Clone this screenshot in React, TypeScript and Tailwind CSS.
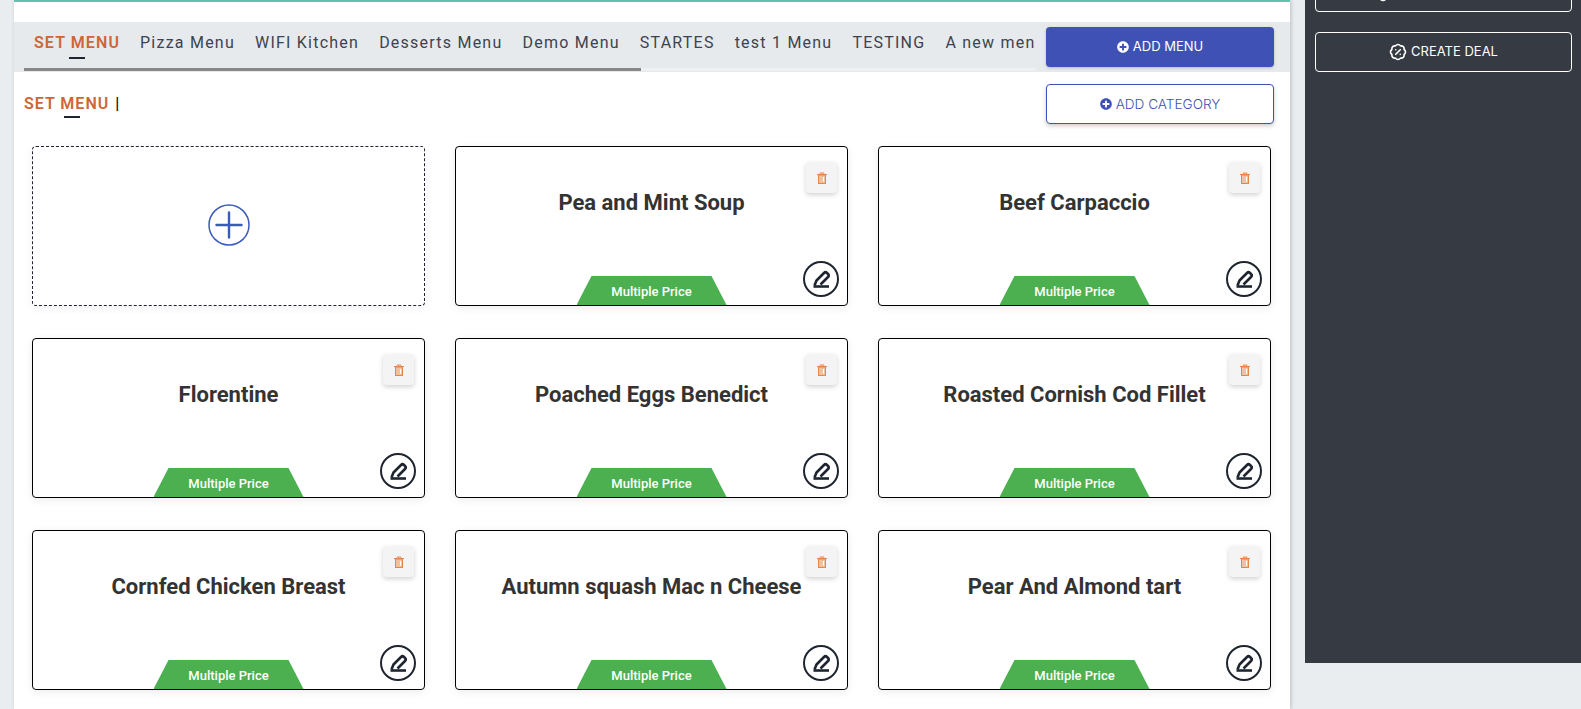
import { BadgePercent } from "lucide-react";
import { FaPlusCircle } from "react-icons/fa";

const menus = [
  "SET MENU",
  "Pizza Menu",
  "WIFI Kitchen",
  "Desserts Menu",
  "Demo Menu",
  "STARTES",
  "test 1 Menu",
  "TESTING",
  "A new menu",
];

const dishes = [
  "Pea and Mint Soup",
  "Beef Carpaccio",
  "Florentine",
  "Poached Eggs Benedict",
  "Roasted Cornish Cod Fillet",
  "Cornfed Chicken Breast",
  "Autumn squash Mac n Cheese",
  "Pear And Almond tart",
];

function TrashIcon() {
  return (
    <svg width="10" height="12" viewBox="0 0 10 12">
      <path d="M3 2V.8h4V2" fill="#eab08a" stroke="#eab08a" strokeWidth="1" />
      <rect x="1.5" y="3" width="7" height="8.5" fill="#ecc2a4" stroke="#e6854a" strokeWidth="1" />
      <path d="M0 2.5h10" stroke="#e6854a" strokeWidth="1" />
      <path d="M6.5 5v4.5" stroke="#fff" strokeWidth="1" />
    </svg>
  );
}

function EditIcon() {
  return (
    <svg width="36" height="36" viewBox="0 0 36 36" fill="none" stroke="#1f2530">
      <circle cx="18" cy="18" r="17" strokeWidth="2" />
      <path
        d="M11.5 24.5 L13.5 19.5 L21 12 Q22.5 10.5 24 12 L25 13 Q26.5 14.5 25 16 L17.5 23.5"
        strokeWidth="2.6"
        strokeLinejoin="round"
      />
      <path d="M10.5 25.5 H26" strokeWidth="2.6" />
    </svg>
  );
}

function DishCard({ name }: { name: string }) {
  return (
    <div className="relative h-[160px] rounded-[4px] border border-black bg-white pt-[43px] shadow-[0_2px_8px_rgba(0,0,0,0.08)]">
      <h3 className="text-center text-[22px] leading-[26px] font-bold text-[#333333] font-['Roboto',sans-serif]">
        {name}
      </h3>
      <button className="absolute top-[15px] right-[10px] flex h-[31px] w-[31px] items-center justify-center rounded-[4px] bg-[#f4f4f4] shadow-[0_2px_5px_rgba(0,0,0,0.18)]">
        <TrashIcon />
      </button>
      <button className="absolute right-[8px] bottom-[8px] flex h-[36px] w-[36px] items-center justify-center">
        <EditIcon />
      </button>
      <div className="absolute bottom-0 left-1/2 flex h-[29px] w-[150px] -translate-x-1/2 items-center justify-center bg-[#4caf50] pt-[2px] text-[13px] font-medium text-white font-['Roboto',sans-serif] [clip-path:polygon(10%_0,90%_0,100%_100%,0_100%)]">
        Multiple Price
      </div>
    </div>
  );
}

export default function App() {
  return (
    <div className="flex h-[709px] w-[1581px] overflow-hidden bg-[#e9edf0] pl-[14px] font-['Roboto',sans-serif]">
      <main className="h-[709px] w-[1276px] shrink-0 border-t-2 border-[#5cc3ae] bg-white pt-[20px] shadow-[1px_0_4px_rgba(0,0,0,0.2)]">
        <div className="flex h-[50px] bg-[#e6eaed] pl-[10px]">
          <div className="flex w-[1012px] flex-col overflow-hidden">
            <div className="flex h-[46px] gap-[20px] overflow-hidden whitespace-nowrap pl-[10px] pt-[9px]">
              {menus.map((menu, i) => (
                <div key={menu} className="relative h-[37px] shrink-0">
                  <span
                    className={
                      i === 0
                        ? "text-[16px] leading-[22px] font-semibold tracking-[1.1px] text-[#cf6537]"
                        : "text-[16px] leading-[22px] tracking-[1.23px] text-[#3d4350]"
                    }
                  >
                    {menu}
                  </span>
                  {i === 0 && (
                    <span className="absolute top-[26px] left-[35px] h-[2px] w-[16px] bg-[#1f2530]" />
                  )}
                </div>
              ))}
            </div>
            <div className="h-[3px] bg-[#eef0f2]">
              <div className="h-full w-[617px] bg-[#888888]" />
            </div>
          </div>
          <button className="mt-[5px] ml-[10px] flex h-[40px] w-[228px] items-center justify-center gap-[4px] rounded-[4px] bg-[#3f51b5] text-[13px] text-white font-['Inter',sans-serif] shadow-[0_1px_3px_rgba(0,0,0,0.2)]">
            <FaPlusCircle className="h-[12px] w-[12px]" />
            ADD MENU
          </button>
        </div>

        <div className="flex items-start justify-between pt-[12px] pr-[16px] pl-[10px]">
          <div className="relative pt-[10px] text-[16px] leading-[20px] font-semibold tracking-[1px] text-[#cf6537]">
            SET MENU
            <span className="ml-[6px] font-medium text-black">|</span>
            <span className="absolute top-[32px] left-[40px] h-[2px] w-[16px] bg-[#1f2530]" />
          </div>
          <button className="flex h-[40px] w-[228px] items-center justify-center gap-[4px] rounded-[4px] border border-[#3f51b5] bg-white text-[13.6px] text-[#3f51b5] font-['Inter',sans-serif] font-light shadow-[0_2px_4px_rgba(0,0,0,0.2)]">
            <FaPlusCircle className="h-[12px] w-[12px]" />
            ADD CATEGORY
          </button>
        </div>

        <div className="grid grid-cols-[393px_393px_393px] gap-x-[30px] gap-y-[32px] pt-[22px] pl-[18px]">
          <div className="flex h-[160px] items-center justify-center rounded-[4px] border border-dashed border-[#1f2530] bg-white pb-[2px] shadow-[0_2px_8px_rgba(0,0,0,0.06)]">
            <svg width="42" height="42" viewBox="0 0 42 42" fill="none" stroke="#3a5cb8">
              <circle cx="21" cy="21" r="20" strokeWidth="1.5" />
              <path d="M8.5 21h25M21 8.5v25" strokeWidth="2.4" strokeLinecap="round" />
            </svg>
          </div>
          {dishes.map((dish) => (
            <DishCard key={dish} name={dish} />
          ))}
        </div>
      </main>

      <aside className="ml-[15px] flex h-[663px] w-[276px] shrink-0 flex-col gap-[20px] bg-[#363a43] pl-[10px]">
        <button className="-mt-[28px] flex h-[40px] w-[257px] shrink-0 items-center justify-center rounded-[4px] border border-white pr-[122px] text-white">
          <BadgePercent className="h-[20px] w-[20px]" />
        </button>
        <button className="flex h-[40px] w-[257px] shrink-0 items-center justify-center gap-[4px] rounded-[4px] border border-white text-[13px] text-white font-['Inter',sans-serif]">
          <BadgePercent className="h-[18px] w-[18px]" strokeWidth={2.2} />
          CREATE DEAL
        </button>
      </aside>
    </div>
  );
}
